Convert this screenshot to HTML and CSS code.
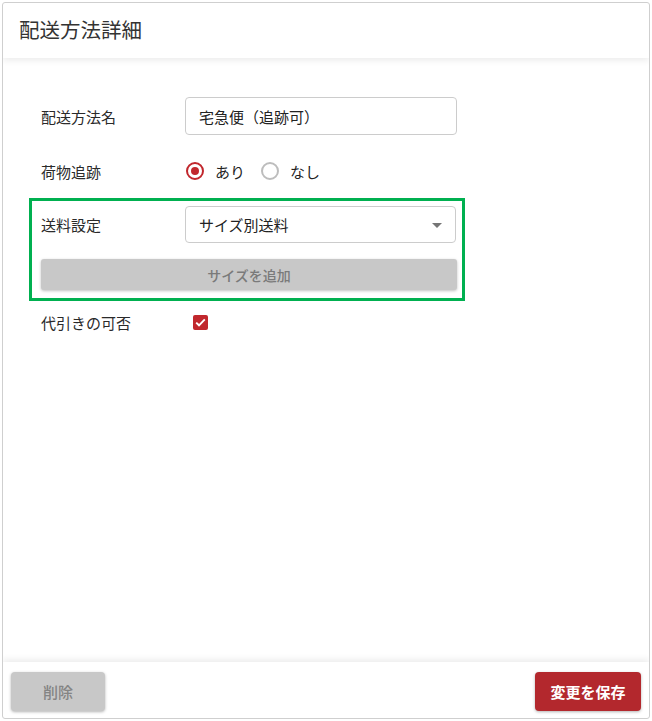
FILE: index.html
```html
<!DOCTYPE html>
<html lang="ja">
<head>
<meta charset="utf-8">
<link rel="stylesheet" href="styles.css">
</head>
<body>
<div class="card">
  <div class="card-header"><h1 class="title">配送方法詳細</h1></div>
  <div class="card-body">
    <div class="row row-input">
      <div class="label">配送方法名</div>
      <div class="input">宅急便（追跡可）</div>
    </div>
    <div class="row row-radio">
      <div class="label">荷物追跡</div>
      <div class="radios">
        <span class="radio checked"></span><span class="radio-text">あり</span>
        <span class="radio"></span><span class="radio-text">なし</span>
      </div>
    </div>
    <div class="highlight">
      <div class="row row-input">
        <div class="label">送料設定</div>
        <div class="select">サイズ別送料<span class="arrow"></span></div>
      </div>
      <button class="btn-add">サイズを追加</button>
    </div>
    <div class="row row-check">
      <div class="label">代引きの可否</div>
      <span class="checkbox"><svg width="11" height="9" viewBox="0 0 11 9"><path d="M1.2 4.6 L4 7.3 L9.8 1.4" fill="none" stroke="#fff" stroke-width="1.9"/></svg></span>
    </div>
  </div>
  <div class="card-footer">
    <button class="btn btn-delete">削除</button>
    <button class="btn btn-save">変更を保存</button>
  </div>
</div>
</body>
</html>
```

FILE: styles.css
```css
* { box-sizing: border-box; }
html, body { margin: 0; padding: 0; background: #fff; }
body {
  font-family: "Noto Sans CJK JP", "Noto Sans", sans-serif;
  color: #333;
  width: 652px;
  height: 721px;
}
.card {
  margin: 2px 0 0 2px;
  width: 648px;
  height: 717px;
  border: 1px solid #cfcfcf;
  border-radius: 3px;
  display: flex;
  flex-direction: column;
  overflow: hidden;
}
.card-header {
  height: 55px;
  display: flex;
  align-items: center;
  padding-left: 16px;
  box-shadow: 0 3px 6px rgba(0,0,0,0.07);
  position: relative;
  z-index: 1;
}
.title {
  margin: 0;
  font-size: 20.5px;
  font-weight: 400;
  color: #333;
  line-height: 1;
  padding-bottom: 3px;
}
.card-body {
  flex: 1;
  padding: 39px 0 0 26px;
}
.row {
  display: flex;
  align-items: center;
}
.row-input { height: 38px; padding-left: 12px; }
.row-radio { height: 24px; margin-top: 24px; padding-left: 12px; }
.row-check { height: 24px; margin-top: 9px; padding-left: 12px; }
.label {
  width: 144px;
  font-size: 15px;
  color: #2a2a2a;
}
.input, .select {
  width: 272px;
  height: 38px;
  border: 1px solid #cccccc;
  border-radius: 4px;
  font-size: 15px;
  color: #222;
  padding-left: 13px;
  display: flex;
  align-items: center;
  position: relative;
}
.select { height: 37px; width: 271px; }
.arrow {
  position: absolute;
  right: 13px;
  top: 16px;
  width: 0;
  height: 0;
  border-left: 5px solid transparent;
  border-right: 5px solid transparent;
  border-top: 5px solid #757575;
}
.radios { display: flex; align-items: center; }
.radio {
  width: 18px;
  height: 18px;
  border-radius: 50%;
  border: 2px solid #bdbdbd;
  position: relative;
  margin-left: 1px;
}
.radio.checked { border-color: #c1272d; }
.radio.checked::after {
  content: "";
  position: absolute;
  left: 3px; top: 3px;
  width: 8px; height: 8px;
  border-radius: 50%;
  background: #c1272d;
}
.radio-text {
  font-size: 15px;
  color: #222;
  margin-left: 11px;
  margin-right: 15px;
}
.highlight {
  margin-top: 15px;
  width: 436px;
  border: 3px solid #00b050;
  padding: 5px 4px 8px 0;
}
.highlight .row-input { padding-left: 9px; height: 37px; }
.btn-add {
  display: block;
  margin: 16px 0 0 9px;
  width: 416px;
  height: 31px;
  border: none;
  border-radius: 3px;
  background: #c8c8c8;
  color: #7a7a7a;
  font-family: inherit;
  font-size: 14px;
  font-weight: 500;
  box-shadow: 0 1px 3px rgba(0,0,0,0.25);
}
.checkbox {
  width: 15px;
  height: 15px;
  border-radius: 2px;
  background: #c1272d;
  display: flex;
  align-items: center;
  justify-content: center;
  margin-left: 8px;
}
.card-footer {
  height: 56px;
  display: flex;
  justify-content: space-between;
  align-items: flex-start;
  padding: 10px 8px 0 8px;
  box-shadow: 0 -3px 6px rgba(0,0,0,0.07);
}
.btn {
  height: 39px;
  border: none;
  border-radius: 4px;
  font-family: inherit;
  font-size: 15px;
  font-weight: 700;
  box-shadow: 0 1px 3px rgba(0,0,0,0.3);
}
.btn-delete {
  width: 94px;
  background: #c8c8c8;
  color: #848484;
  font-weight: 500;
}
.btn-save {
  width: 106px;
  background: #b3282d;
  color: #fff;
}
```
